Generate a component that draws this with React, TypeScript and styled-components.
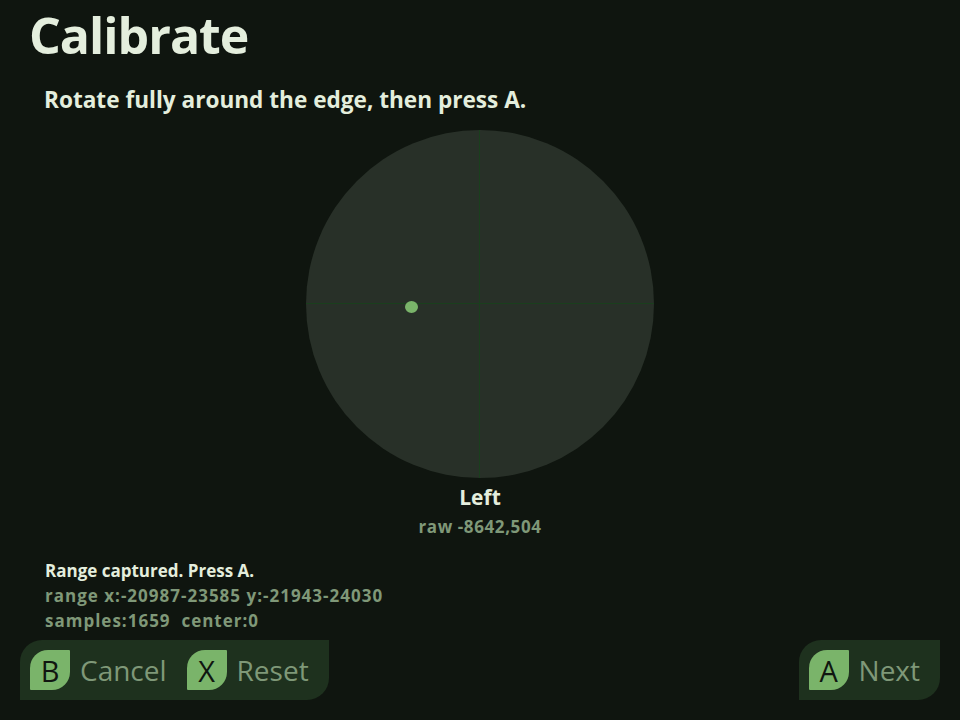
import React from "react";
import styled, { createGlobalStyle } from "styled-components";

const Global = createGlobalStyle`
  html, body { margin: 0; padding: 0; background: #0f150f; }
  body { font-family: "Open Sans", "Noto Sans", sans-serif; }
`;

const Screen = styled.div`
  width: 960px;
  height: 720px;
  background: #0f150f;
  display: flex;
  flex-direction: column;
  overflow: hidden;
  color: #e4eedd;
`;

const Title = styled.h1`
  margin: 1px 0 0 0;
  padding-left: 29px;
  font-size: 50px;
  line-height: 68px;
  letter-spacing: -1px;
  font-weight: 700;
  color: #e4eedd;
`;

const Prompt = styled.p`
  margin: 16px 0 0 0;
  padding-left: 44px;
  font-size: 22.6px;
  line-height: 30px;
  font-weight: 700;
  color: #e4eedd;
`;

const Stage = styled.div`
  margin-top: 15px;
  display: flex;
  flex-direction: column;
  align-items: center;
`;

const Pad = styled.div`
  position: relative;
  width: 348px;
  height: 348px;
  border-radius: 50%;
  background: #283028;
  overflow: hidden;
`;

const AxisV = styled.div`
  position: absolute;
  left: 173px;
  top: 0;
  width: 1px;
  height: 100%;
  background: #1a3f1d;
`;

const AxisH = styled.div`
  position: absolute;
  top: 173px;
  left: 0;
  width: 100%;
  height: 1px;
  background: #1a3f1d;
`;

const Dot = styled.div`
  position: absolute;
  width: 13px;
  height: 12px;
  margin: -6px 0 0 -6.5px;
  border-radius: 50%;
  background: #7ab46a;
`;

const StickName = styled.div`
  margin-top: 6px;
  font-size: 21px;
  line-height: 26px;
  font-weight: 700;
  color: #e4eedd;
`;

const Raw = styled.div`
  margin-top: 7px;
  font-size: 17px;
  line-height: 20px;
  letter-spacing: 0.6px;
  font-weight: 700;
  color: #7f9878;
`;

const Status = styled.div`
  margin-top: 21px;
  padding-left: 45px;
  display: flex;
  flex-direction: column;
`;

const StatusLine = styled.div<{ $strong?: boolean }>`
  font-size: 17px;
  line-height: 25px;
  font-weight: 700;
  white-space: pre;
  letter-spacing: ${(p) => (p.$strong ? "0" : "1px")};
  color: ${(p) => (p.$strong ? "#e4eedd" : "#7f9878")};
`;

const Footer = styled.div`
  margin-top: 7px;
  padding: 0 20px;
  display: flex;
  justify-content: space-between;
`;

const Bar = styled.div`
  height: 60px;
  display: flex;
  align-items: center;
  gap: 20px;
  padding: 0 20px 0 10px;
  background: #1e311e;
  border-radius: 22px 0 22px 0;
`;

const Action = styled.div`
  display: flex;
  align-items: center;
  gap: 10px;
`;

const Badge = styled.div`
  width: 40px;
  height: 40px;
  display: flex;
  align-items: center;
  justify-content: center;
  background: #7ab46a;
  border-radius: 18px 1px 18px 1px;
  color: #101610;
  font-size: 29px;
  font-weight: 500;
  line-height: 1;
`;

const ActionLabel = styled.span`
  font-size: 28px;
  line-height: 32px;
  font-weight: 500;
  color: #7f9878;
`;

const raw = { x: -8642, y: 504 };
const half = 22100;
const radius = 174;

export default function App() {
  const dx = (raw.x / half) * radius;
  const dy = (raw.y / half) * radius * 0.6;
  return (
    <>
      <Global />
      <Screen>
        <Title>Calibrate</Title>
        <Prompt>Rotate fully around the edge, then press A.</Prompt>
        <Stage>
          <Pad>
            <AxisV />
            <AxisH />
            <Dot style={{ left: radius + dx, top: radius + dy + 1 }} />
          </Pad>
          <StickName>Left</StickName>
          <Raw>raw -8642,504</Raw>
        </Stage>
        <Status>
          <StatusLine $strong>Range captured. Press A.</StatusLine>
          <StatusLine>range x:-20987-23585 y:-21943-24030</StatusLine>
          <StatusLine>samples:1659  center:0</StatusLine>
        </Status>
        <Footer>
          <Bar>
            <Action>
              <Badge>B</Badge>
              <ActionLabel>Cancel</ActionLabel>
            </Action>
            <Action>
              <Badge>X</Badge>
              <ActionLabel>Reset</ActionLabel>
            </Action>
          </Bar>
          <Bar>
            <Action>
              <Badge>A</Badge>
              <ActionLabel>Next</ActionLabel>
            </Action>
          </Bar>
        </Footer>
      </Screen>
    </>
  );
}
